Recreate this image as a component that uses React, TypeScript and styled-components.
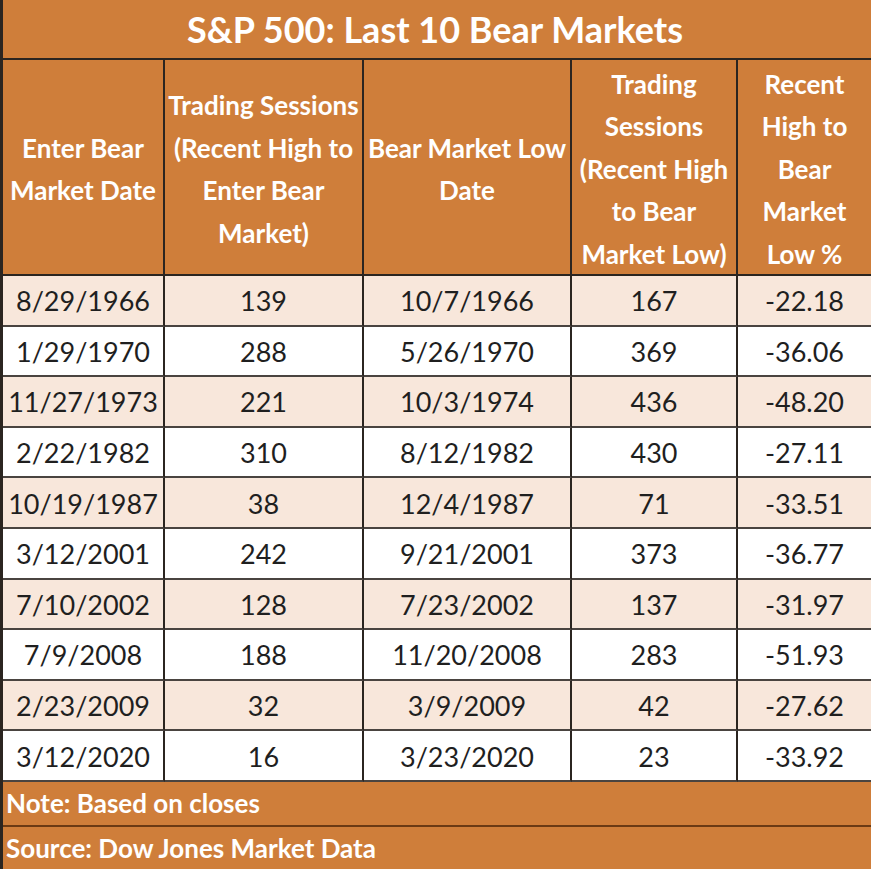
import React from "react";
import styled, { createGlobalStyle } from "styled-components";

const Global = createGlobalStyle`
  html, body { margin: 0; padding: 0; background: #ffffff; }
  body { font-family: Lato, "Open Sans", sans-serif; }
`;

const ORANGE = "#cf7e3a";
const PEACH = "#f8e7db";
const LINE = "#2b2520";

const Sheet = styled.div`
  width: 868px;
  height: 869px;
  border-left: 3px solid ${LINE};
  display: grid;
  grid-template-columns: 162px 199px 208px 166px 133px;
  grid-template-rows: 60px 216px repeat(10, 50.6px) 45px 42px;
  font-family: Lato, "Open Sans", sans-serif;
  overflow: hidden;
`;

const Title = styled.div`
  grid-column: 1 / -1;
  background: ${ORANGE};
  color: #ffffff;
  font-weight: 700;
  font-size: 36px;
  display: flex;
  align-items: center;
  justify-content: center;
  border-bottom: 2px solid ${LINE};
  box-sizing: border-box;
  padding-right: 4px;
`;

const HeadCell = styled.div<{ $last?: boolean }>`
  background: ${ORANGE};
  color: #ffffff;
  font-weight: 700;
  font-size: 26px;
  line-height: 42.5px;
  text-align: center;
  white-space: nowrap;
  display: flex;
  align-items: center;
  justify-content: center;
  box-sizing: border-box;
  border-right: ${(p) => (p.$last ? "none" : `2px solid ${LINE}`)};
  border-bottom: 2px solid ${LINE};
  padding-top: 4px;
`;

const Cell = styled.div<{ $shade: boolean; $last?: boolean }>`
  background: ${(p) => (p.$shade ? PEACH : "#ffffff")};
  color: #1f1f1f;
  font-size: 27px;
  display: flex;
  align-items: center;
  justify-content: center;
  box-sizing: border-box;
  border-right: ${(p) => (p.$last ? "none" : `2px solid ${LINE}`)};
  border-bottom: 2px solid #4a4440;
  padding-top: 1px;
`;

const Foot = styled.div<{ $divider?: boolean }>`
  grid-column: 1 / -1;
  background: ${ORANGE};
  color: #ffffff;
  font-weight: 700;
  font-size: 26px;
  display: flex;
  align-items: center;
  padding-left: 3px;
  box-sizing: border-box;
  border-bottom: ${(p) => (p.$divider ? "2px solid #6b3a14" : "none")};
`;

const headers: string[][] = [
  ["Enter Bear", "Market Date"],
  ["Trading Sessions", "(Recent High to", "Enter Bear", "Market)"],
  ["Bear Market Low", "Date"],
  ["Trading", "Sessions", "(Recent High", "to Bear", "Market Low)"],
  ["Recent", "High to", "Bear", "Market", "Low %"],
];

const rows: string[][] = [
  ["8/29/1966", "139", "10/7/1966", "167", "-22.18"],
  ["1/29/1970", "288", "5/26/1970", "369", "-36.06"],
  ["11/27/1973", "221", "10/3/1974", "436", "-48.20"],
  ["2/22/1982", "310", "8/12/1982", "430", "-27.11"],
  ["10/19/1987", "38", "12/4/1987", "71", "-33.51"],
  ["3/12/2001", "242", "9/21/2001", "373", "-36.77"],
  ["7/10/2002", "128", "7/23/2002", "137", "-31.97"],
  ["7/9/2008", "188", "11/20/2008", "283", "-51.93"],
  ["2/23/2009", "32", "3/9/2009", "42", "-27.62"],
  ["3/12/2020", "16", "3/23/2020", "23", "-33.92"],
];

export default function App() {
  return (
    <>
      <Global />
      <Sheet>
        <Title>S&amp;P 500: Last 10 Bear Markets</Title>
        {headers.map((lines, i) => (
          <HeadCell key={i} $last={i === headers.length - 1}>
            <div>
              {lines.map((l, j) => (
                <div key={j}>{l}</div>
              ))}
            </div>
          </HeadCell>
        ))}
        {rows.map((r, ri) =>
          r.map((v, ci) => (
            <Cell key={`${ri}-${ci}`} $shade={ri % 2 === 0} $last={ci === r.length - 1}>
              {v}
            </Cell>
          ))
        )}
        <Foot $divider>Note: Based on closes</Foot>
        <Foot>Source: Dow Jones Market Data</Foot>
      </Sheet>
    </>
  );
}
